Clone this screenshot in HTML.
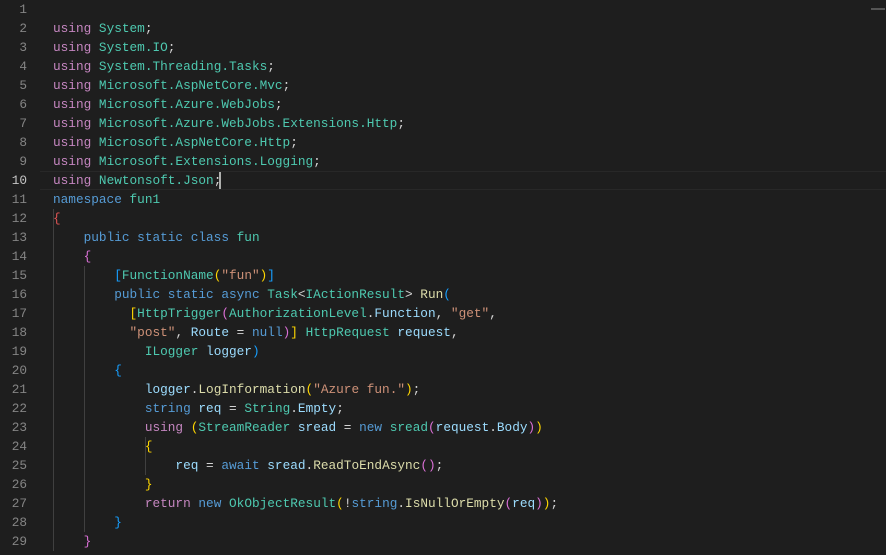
<!DOCTYPE html><html><head><style>
body{margin:0;background:#1e1e1e;width:886px;height:555px;overflow:hidden;position:relative;font-family:"Liberation Mono",monospace;font-size:12.75px;}
.ln{position:absolute;left:0;width:27px;text-align:right;color:#858585;height:19px;line-height:19px;}
.c{position:absolute;left:53px;white-space:pre;color:#d4d4d4;height:19px;line-height:19px;}
.k{color:#569cd6}.u{color:#c586c0}.t{color:#4ec9b0}.v{color:#9cdcfe}.s{color:#ce9178}.f{color:#dcdcaa}
.g{color:#ffd700}.p{color:#da70d6}.b{color:#179fff}.r{color:#e05555}
.guide{position:absolute;width:1px;background:#404040}
</style></head><body>
<div style="position:absolute;left:40px;top:171px;width:846px;height:17px;border-top:1px solid #282828;border-bottom:1px solid #282828"></div>
<div style="position:absolute;left:219px;top:172px;width:2px;height:17px;background:#aeafad"></div>
<div class="guide" style="left:53px;top:209px;height:342px"></div>
<div class="guide" style="left:84px;top:266px;height:266px"></div>
<div class="guide" style="left:145px;top:437px;height:38px"></div>
<div style="position:absolute;left:871px;top:8px;width:14px;height:2px;background:#555"></div>
<div id="lines"></div>
<script>
var L=["",
'<span class="u">using</span> <span class="t">System</span>;',
'<span class="u">using</span> <span class="t">System.IO</span>;',
'<span class="u">using</span> <span class="t">System.Threading.Tasks</span>;',
'<span class="u">using</span> <span class="t">Microsoft.AspNetCore.Mvc</span>;',
'<span class="u">using</span> <span class="t">Microsoft.Azure.WebJobs</span>;',
'<span class="u">using</span> <span class="t">Microsoft.Azure.WebJobs.Extensions.Http</span>;',
'<span class="u">using</span> <span class="t">Microsoft.AspNetCore.Http</span>;',
'<span class="u">using</span> <span class="t">Microsoft.Extensions.Logging</span>;',
'<span class="u">using</span> <span class="t">Newtonsoft.Json</span>;',
'<span class="k">namespace</span> <span class="t">fun1</span>',
'<span class="r">{</span>',
'    <span class="k">public static class</span> <span class="t">fun</span>',
'    <span class="p">{</span>',
'        <span class="b">[</span><span class="t">FunctionName</span><span class="g">(</span><span class="s">"fun"</span><span class="g">)</span><span class="b">]</span>',
'        <span class="k">public static async</span> <span class="t">Task</span>&lt;<span class="t">IActionResult</span>&gt; <span class="f">Run</span><span class="b">(</span>',
'          <span class="g">[</span><span class="t">HttpTrigger</span><span class="p">(</span><span class="t">AuthorizationLevel</span>.<span class="v">Function</span>, <span class="s">"get"</span>,',
'          <span class="s">"post"</span>, <span class="v">Route</span> = <span class="k">null</span><span class="p">)</span><span class="g">]</span> <span class="t">HttpRequest</span> <span class="v">request</span>,',
'            <span class="t">ILogger</span> <span class="v">logger</span><span class="b">)</span>',
'        <span class="b">{</span>',
'            <span class="v">logger</span>.<span class="f">LogInformation</span><span class="g">(</span><span class="s">"Azure fun."</span><span class="g">)</span>;',
'            <span class="k">string</span> <span class="v">req</span> = <span class="t">String</span>.<span class="v">Empty</span>;',
'            <span class="u">using</span> <span class="g">(</span><span class="t">StreamReader</span> <span class="v">sread</span> = <span class="k">new</span> <span class="t">sread</span><span class="p">(</span><span class="v">request</span>.<span class="v">Body</span><span class="p">)</span><span class="g">)</span>',
'            <span class="g">{</span>',
'                <span class="v">req</span> = <span class="k">await</span> <span class="v">sread</span>.<span class="f">ReadToEndAsync</span><span class="p">()</span>;',
'            <span class="g">}</span>',
'            <span class="u">return</span> <span class="k">new</span> <span class="t">OkObjectResult</span><span class="g">(</span>!<span class="k">string</span>.<span class="f">IsNullOrEmpty</span><span class="p">(</span><span class="v">req</span><span class="p">)</span><span class="g">)</span>;',
'        <span class="b">}</span>',
'    <span class="p">}</span>'];
var h='';for(var i=0;i<29;i++){var y=i*19;h+='<div class="ln" style="top:'+y+'px'+(i==9?';color:#c6c6c6':'')+'">'+(i+1)+'</div><div class="c" style="top:'+y+'px">'+L[i]+'</div>';}
document.getElementById('lines').innerHTML=h;
</script>
</body></html>
